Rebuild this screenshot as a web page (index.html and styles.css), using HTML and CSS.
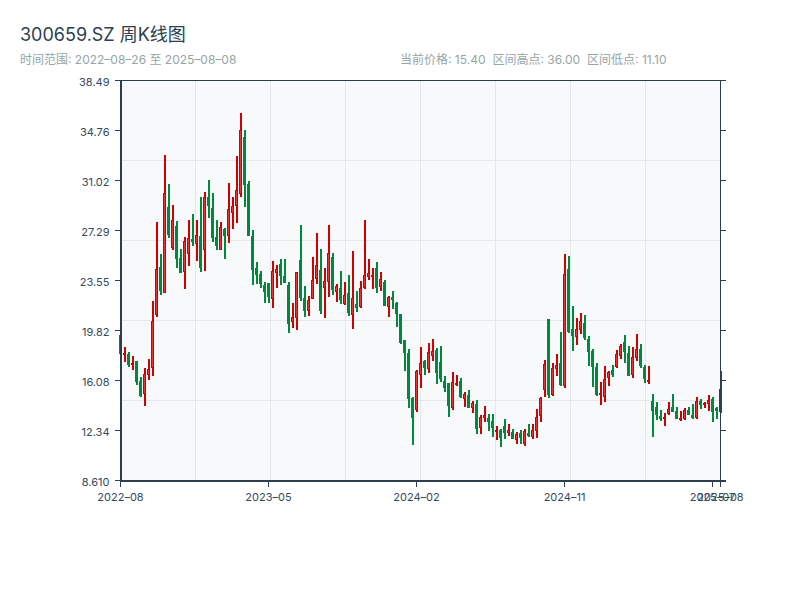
FILE: index.html
```html
<!DOCTYPE html>
<html lang="zh">
<head>
	<meta charset="UTF-8">
	<title>300659.SZ 周K线图</title>
	<link rel="stylesheet" href="styles.css">
</head>
<body>
	<div class="header">
		<h1>300659.SZ 周K线图</h1>
		<div class="sub">
			<div class="range">时间范围: 2022–08–26 至 2025–08–08</div>
			<div class="stats">
				<span>当前价格: 15.40</span>
				<span>区间高点: 36.00</span>
				<span>区间低点: 11.10</span>
			</div>
		</div>
	</div>
	<svg class="chart" id="chart" width="800" height="530" viewBox="0 70 800 530"></svg>
	<script src="chart.js"></script>
</body>
</html>
```

FILE: styles.css
```css
*{
	margin:0;
	padding:0;
	box-sizing:border-box;
}
body{
	width:800px;
	height:600px;
	overflow:hidden;
	background:#fff;
	font-family:Inter,"Noto Sans CJK SC",sans-serif;
}
.header{
	height:70px;
	padding:23px 20px 0;
}
h1{
	font-size:18px;
	font-weight:400;
	line-height:24px;
	color:#2c3e50;
}
.sub{
	display:flex;
	margin-top:4px;
	font-size:12px;
	line-height:18px;
	color:#95a5a6;
}
.range{
	width:380px;
}
.stats{
	display:flex;
	gap:7px;
}
.chart{
	display:block;
}
.plot{
	fill:#f8f9fa;
}
.grid{
	fill:#e3e6ea;
}
.axis{
	fill:#2c3e50;
}
.tick-label{
	font-size:11px;
	fill:#34495e;
}
.tick-label.y{
	text-anchor:end;
}
.tick-label.x{
	text-anchor:middle;
}
.wick.up{
	fill:#d00000;
}
.wick.down,.body.down{
	fill:#00893c;
}
.body.up{
	fill:#f23030;
	stroke:#d00000;
	stroke-width:1;
}
```

FILE: chart.js
```js
// y values are chart pixels: high, low, body top, body bottom
var candles = [
	["d",335,354,335,354],["u",347,362,353,355],["d",352,367,354,365],["u",356,370,363,365],
	["d",361,385,361,382],["d",377,397,381,396],["u",368,406,374,394],["u",359,380,369,375],
	["u",301,376,321,368],["u",222,317,269,315],["d",254,295,267,291],["u",155,293,193,293],
	["d",184,238,207,235],["u",205,250,220,248],["d",221,268,226,259],["d",249,273,258,273],
	["u",237,289,241,272],["u",220,266,238,254],["d",214,246,239,242],["u",220,261,235,244],
	["d",197,272,236,268],["u",192,271,197,250],["d",180,218,197,206],["d",193,242,208,238],
	["d",220,250,237,246],["u",222,250,227,250],["d",228,259,229,236],["u",183,243,209,236],
	["u",197,229,206,213],["u",156,223,190,206],["u",113,197,130,194],["d",130,207,137,185],
	["d",181,236,184,236],["d",230,285,236,270],["d",262,284,268,275],["d",271,288,274,284],
	["d",282,303,285,292],["d",283,303,283,297],["u",261,308,271,299],["u",265,288,269,273],
	["d",259,285,264,276],["d",259,283,276,283],["d",282,333,285,324],["u",303,328,317,322],
	["u",272,330,272,318],["d",225,301,260,298],["d",286,317,298,311],["u",296,316,300,311],
	["u",257,299,280,299],["u",233,284,265,279],["d",249,314,270,311],["u",268,318,281,288],
	["u",225,297,253,282],["d",253,295,257,290],["u",284,302,286,292],["d",271,304,288,300],
	["u",282,305,295,304],["d",275,316,293,313],["u",251,329,298,315],["d",291,312,304,308],
	["u",281,308,288,307],["u",220,289,275,288],["u",259,280,273,277],["u",268,289,275,277],
	["d",262,293,268,288],["u",272,291,279,287],["d",280,306,282,306],["u",296,317,297,307],
	["d",291,309,297,300],["d",302,327,303,314],["d",314,344,314,343],["d",340,371,340,353],
	["d",349,408,353,399],["d",397,445,398,418],["u",370,412,371,410],["u",347,388,363,375],
	["d",360,375,361,368],["u",343,373,352,369],["u",339,361,351,356],["d",348,384,350,373],
	["d",346,382,362,379],["d",376,392,381,388],["d",383,417,383,406],["u",372,410,382,408],
	["u",375,386,383,385],["d",378,398,381,397],["u",392,407,394,399],["d",390,408,395,408],
	["u",401,413,403,408],["d",400,434,404,429],["u",415,434,417,428],["u",406,422,415,418],
	["d",414,431,418,422],["d",414,437,421,428],["u",426,440,430,432],["d",429,447,430,438],
	["d",419,439,426,433],["u",424,436,430,433],["d",429,439,432,439],["u",432,444,434,440],
	["d",430,444,433,438],["u",429,446,431,444],["d",424,437,433,436],["u",424,439,430,437],
	["u",409,438,417,431],["u",397,422,398,416],["u",360,397,364,390],["d",319,398,319,395],
	["u",363,396,368,395],["u",354,376,365,369],["d",332,386,363,385],["u",254,388,274,386],
	["d",256,333,269,332],["d",306,351,329,336],["u",318,345,329,337],["u",313,334,321,330],
	["d",315,340,323,338],["d",336,366,339,352],["d",349,387,351,367],["d",363,396,367,395],
	["u",382,405,393,395],["u",366,402,379,397],["u",371,386,372,378],["d",365,377,370,375],
	["u",350,368,354,367],["u",344,359,346,356],["d",335,363,342,352],["d",346,376,353,376],
	["u",347,378,357,375],["u",334,361,349,358],["d",344,368,349,366],["d",365,383,367,379],
	["u",366,384,380,382],["d",394,437,401,411],["d",402,420,407,415],["d",410,421,416,419],
	["u",413,426,417,418],["u",402,415,409,414],["d",394,412,407,412],["d",407,419,411,419],
	["u",411,421,418,420],["u",408,420,410,419],["d",407,415,410,415],["d",404,419,415,418],
	["u",397,419,401,418],["d",399,409,401,405],["u",402,408,403,405],["u",395,411,400,404],
	["d",397,422,399,412],["d",407,419,408,411],["u",371,413,389,412]
];

var yLabels = ["38.49","34.76","31.02","27.29","23.55","19.82","16.08","12.34","8.610"];
var xLabels = [[120,"2022–08"],[268,"2023–05"],[416,"2024–02"],[564,"2024–11"],[712,"2025–07"],[720,"2025–08"]];

var svg = document.getElementById("chart");
var NS = "http://www.w3.org/2000/svg";

function rect(cls, x, y, w, h){
	var r = document.createElementNS(NS, "rect");
	r.setAttribute("class", cls);
	r.setAttribute("x", x);
	r.setAttribute("y", y);
	r.setAttribute("width", w);
	r.setAttribute("height", h);
	svg.appendChild(r);
}

function label(cls, x, y, str){
	var t = document.createElementNS(NS, "text");
	t.setAttribute("class", "tick-label " + cls);
	t.setAttribute("x", x);
	t.setAttribute("y", y);
	t.textContent = str;
	svg.appendChild(t);
}

rect("plot", 120, 80, 600, 400);

var i;
for(i=195; i<720; i+=75){
	rect("grid", i, 81, 1, 399);
}
for(i=160; i<480; i+=80){
	rect("grid", 122, i, 598, 1);
}

candles.forEach(function(c, n){
	var x = 120 + n*4;
	var dir = c[0] == "u" ? "up" : "down";
	rect("wick " + dir, x, c[1], 2, c[2]-c[1]);
	if(dir == "up"){
		rect("body up", x-0.5, c[3]+0.5, 2, Math.max(c[4]-c[3]-1, 1));
	}else{
		rect("body down", x-1, c[3], 3, c[4]-c[3]);
	}
});

// axes sit over the candles
rect("axis", 120, 80, 606, 1);
rect("axis", 120, 80, 2, 402);
rect("axis", 720, 80, 1, 402);
rect("axis", 120, 480, 606, 2);

yLabels.forEach(function(s, n){
	var y = 80 + n*50;
	rect("axis", 115, y, 5, 1);
	rect("axis", 721, y, 5, 1);
	label("y", 109.5, y+5.5, s);
});

xLabels.forEach(function(l){
	rect("axis", l[0], 482, 1, 5);
	label("x", l[0]+0.5, 501, l[1]);
});
```
